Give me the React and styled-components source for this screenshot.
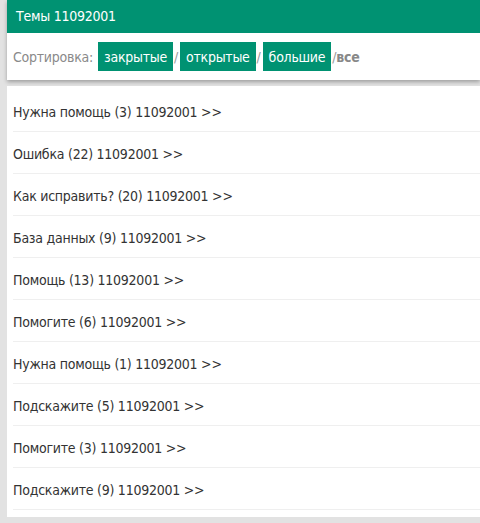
import React from "react";
import styled, { createGlobalStyle } from "styled-components";

const GlobalStyle = createGlobalStyle`
  body {
    margin: 0;
    background: #e2e2e2;
    font-family: "DejaVu Sans Condensed", "DejaVu Sans", Verdana, sans-serif;
    letter-spacing: -0.25px;
  }
`;

const StyledPage = styled.main`
  padding-left: 7px;
  width: 473px;
`;

const StyledTopPanel = styled.section`
  background: #fff;
  box-shadow: 0 2px 4px rgba(0, 0, 0, 0.3);
`;

const StyledTitle = styled.h1`
  background: #009272;
  color: #fff;
  font-size: 14px;
  font-weight: normal;
  height: 33px;
  line-height: 33px;
  margin: 0;
  padding-left: 9px;
`;

const StyledSortBar = styled.nav`
  align-items: center;
  color: #8a8a8a;
  display: flex;
  font-size: 14px;
  height: 47px;
  padding-left: 6px;
`;

const StyledLabel = styled.span`
  margin-right: 5px;
`;

const StyledTag = styled.a`
  align-items: center;
  background: #009272;
  color: #fff;
  display: flex;
  height: 29px;
  padding: 0 6px;
  text-decoration: none;
`;

const StyledSlash = styled.span`
  color: #999;
  margin: 0 ${props => (props.tight ? "0" : "2px")} 0 1px;
`;

const StyledAll = styled.b`
  color: #888;
`;

const StyledList = styled.section`
  background: #fff;
  margin-top: 6px;
  padding: 4px 0 7px 6px;
`;

const StyledRow = styled.a`
  align-items: center;
  border-bottom: 1px solid #efefef;
  box-sizing: border-box;
  color: #333;
  display: flex;
  font-size: 14px;
  height: 42px;
  padding-top: 3px;
  text-decoration: none;
`;

const topics = [
  ["Нужна помощь", 3],
  ["Ошибка", 22],
  ["Как исправить?", 20],
  ["База данных", 9],
  ["Помощь", 13],
  ["Помогите", 6],
  ["Нужна помощь", 1],
  ["Подскажите", 5],
  ["Помогите", 3],
  ["Подскажите", 9]
];

export default function App() {
  return (
    <StyledPage>
      <GlobalStyle />
      <StyledTopPanel>
        <StyledTitle>Темы 11092001</StyledTitle>
        <StyledSortBar>
          <StyledLabel>Сортировка:</StyledLabel>
          <StyledTag>закрытые</StyledTag>
          <StyledSlash>/</StyledSlash>
          <StyledTag>открытые</StyledTag>
          <StyledSlash>/</StyledSlash>
          <StyledTag>большие</StyledTag>
          <StyledSlash tight>/</StyledSlash>
          <StyledAll>все</StyledAll>
        </StyledSortBar>
      </StyledTopPanel>

      <StyledList>
        {topics.map(([name, count], i) => (
          <StyledRow key={i}>
            {name} ({count}) 11092001 &gt;&gt;
          </StyledRow>
        ))}
      </StyledList>
    </StyledPage>
  );
}
